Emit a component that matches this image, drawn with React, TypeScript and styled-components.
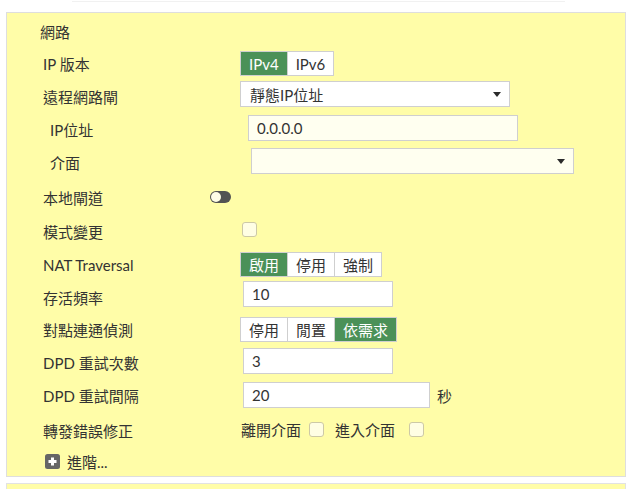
import React from "react";
import styled, { createGlobalStyle } from "styled-components";

const GlobalStyle = createGlobalStyle`
  body {
    margin: 0;
    background: #fff;
    font-family: Lato, "Noto Sans CJK TC", sans-serif;
    font-size: 15px;
    color: #333;
  }
`;

const Page = styled.div`
  width: 620px;
  padding: 1px 0 0 6px;
`;

const TopEdge = styled.div`
  margin-left: 66px;
  width: 493px;
  height: 1px;
  background: #f1f1f1;
`;

const Panel = styled.section`
  margin-top: 10px;
  background: #fffda8;
  border: 1px solid #dedede;
  padding-left: 36px;
`;

const NextPanel = styled.section`
  margin-top: 6px;
  height: 20px;
  background: #fffda8;
  border: 1px solid #e2e2e2;
`;

const Title = styled.div`
  height: 34px;
  padding-top: 2px;
  box-sizing: border-box;
  margin-left: -3px;
  display: flex;
  align-items: center;
`;

const Row = styled.div<{ $h: number }>`
  height: ${({ $h }) => $h}px;
  display: flex;
  align-items: center;
`;

const Label = styled.div<{ $indent?: boolean; $drop?: number }>`
  width: 197px;
  flex: none;
  padding-left: ${({ $indent }) => ($indent ? 7 : 0)}px;
  margin-top: ${({ $drop }) => ($drop || 0) * 2}px;
  box-sizing: border-box;
`;

const Segmented = styled.div`
  display: inline-flex;
  height: 25px;
  border: 1px solid #cfcfcf;
  box-sizing: border-box;
  background: #fff;
`;

const SegButton = styled.div<{ $active?: boolean }>`
  display: flex;
  align-items: center;
  padding: 0 8px;
  border-left: 1px solid #cfcfcf;
  background: ${({ $active }) => ($active ? "#4b9158" : "#fff")};
  color: ${({ $active }) => ($active ? "#fff" : "#333")};
  &:first-child {
    border-left: none;
  }
`;

const Select = styled.div<{ $w: number; $ml?: number; $lift?: number; $ivory?: boolean }>`
  width: ${({ $w }) => $w}px;
  height: 26px;
  margin-left: ${({ $ml }) => $ml || 0}px;
  margin-bottom: ${({ $lift }) => ($lift || 0) * 2}px;
  border: 1px solid #cfcfcf;
  box-sizing: border-box;
  background: ${({ $ivory }) => ($ivory ? "#fffff0" : "#fff")};
  display: flex;
  align-items: center;
  justify-content: space-between;
  padding: 0 8px 0 9px;
`;

const Caret = styled.span`
  width: 0;
  height: 0;
  border-left: 4.5px solid transparent;
  border-right: 4.5px solid transparent;
  border-top: 5px solid #2b2b2b;
`;

const TextInput = styled.input<{ $w: number; $ml?: number; $lift?: number; $ivory?: boolean }>`
  width: ${({ $w }) => $w}px;
  height: 26px;
  margin: 0 0 ${({ $lift }) => ($lift || 0) * 2}px ${({ $ml }) => $ml || 0}px;
  border: 1px solid #cfcfcf;
  box-sizing: border-box;
  background: ${({ $ivory }) => ($ivory ? "#fffff0" : "#fff")};
  padding: 0 8px;
  font: inherit;
  color: #333;
  outline: none;
`;

const Toggle = styled.span`
  position: relative;
  margin-left: -30px;
  width: 21px;
  height: 12px;
  border-radius: 6px;
  background: #535353;
  &::after {
    content: "";
    position: absolute;
    left: 1px;
    top: 1px;
    width: 10px;
    height: 10px;
    border-radius: 50%;
    background: #fffde6;
  }
`;

const Check = styled.span<{ $ml?: number; $lift?: number }>`
  display: inline-block;
  width: 15px;
  height: 15px;
  margin-left: ${({ $ml }) => $ml || 0}px;
  margin-bottom: ${({ $lift }) => ($lift || 0) * 2}px;
  border: 1px solid #cdc9a6;
  border-radius: 3px;
  background: #fffee4;
  box-sizing: border-box;
`;

const Inline = styled.div`
  display: flex;
  align-items: center;
  margin-left: 1px;
`;

const InlineText = styled.span<{ $ml?: number }>`
  margin-left: ${({ $ml }) => $ml || 0}px;
`;

const Unit = styled.span`
  margin-left: 7px;
`;

const Advanced = styled.div`
  display: flex;
  align-items: center;
  gap: 7px;
  margin-left: 2px;
`;

const PlusIcon = () => (
  <svg width="15" height="15" viewBox="0 0 15 15">
    <rect x="0" y="0" width="15" height="15" rx="2.5" fill="#666" />
    <path d="M7.5 3.5v8M3.5 7.5h8" stroke="#fff" strokeWidth="3" />
  </svg>
);

export default function App() {
  return (
    <Page>
      <GlobalStyle />
      <TopEdge />
      <Panel>
        <Title>網路</Title>
        <Row $h={33}>
          <Label>IP 版本</Label>
          <Segmented>
            <SegButton $active>IPv4</SegButton>
            <SegButton>IPv6</SegButton>
          </Segmented>
        </Row>
        <Row $h={32}>
          <Label>遠程網路閘</Label>
          <Select $w={270} $lift={2}>
            <span>靜態IP位址</span>
            <Caret />
          </Select>
        </Row>
        <Row $h={34}>
          <Label $indent>IP位址</Label>
          <TextInput $w={270} $ml={8} $lift={1} $ivory defaultValue="0.0.0.0" />
        </Row>
        <Row $h={33}>
          <Label $indent>介面</Label>
          <Select $w={323} $ml={11} $lift={1.5} $ivory>
            <span />
            <Caret />
          </Select>
        </Row>
        <Row $h={36}>
          <Label>本地閘道</Label>
          <Toggle />
        </Row>
        <Row $h={33}>
          <Label>模式變更</Label>
          <Check $ml={2} $lift={2} />
        </Row>
        <Row $h={33}>
          <Label>NAT Traversal</Label>
          <Segmented>
            <SegButton $active>啟用</SegButton>
            <SegButton>停用</SegButton>
            <SegButton>強制</SegButton>
          </Segmented>
        </Row>
        <Row $h={32}>
          <Label>存活頻率</Label>
          <TextInput $w={150} $ml={3} $lift={3} defaultValue="10" />
        </Row>
        <Row $h={33}>
          <Label>對點連通偵測</Label>
          <Segmented>
            <SegButton>停用</SegButton>
            <SegButton>閒置</SegButton>
            <SegButton $active>依需求</SegButton>
          </Segmented>
        </Row>
        <Row $h={33}>
          <Label>DPD 重試次數</Label>
          <TextInput $w={150} $ml={3} $lift={1.5} defaultValue="3" />
        </Row>
        <Row $h={33}>
          <Label>DPD 重試間隔</Label>
          <TextInput $w={187} $ml={3} $lift={0.5} defaultValue="20" />
          <Unit>秒</Unit>
        </Row>
        <Row $h={34}>
          <Label $drop={1}>轉發錯誤修正</Label>
          <Inline>
            <InlineText>離開介面</InlineText>
            <Check $ml={8} />
            <InlineText $ml={11}>進入介面</InlineText>
            <Check $ml={14} />
          </Inline>
        </Row>
        <Row $h={30}>
          <Advanced>
            <PlusIcon />
            <span>進階...</span>
          </Advanced>
        </Row>
      </Panel>
      <NextPanel />
    </Page>
  );
}
